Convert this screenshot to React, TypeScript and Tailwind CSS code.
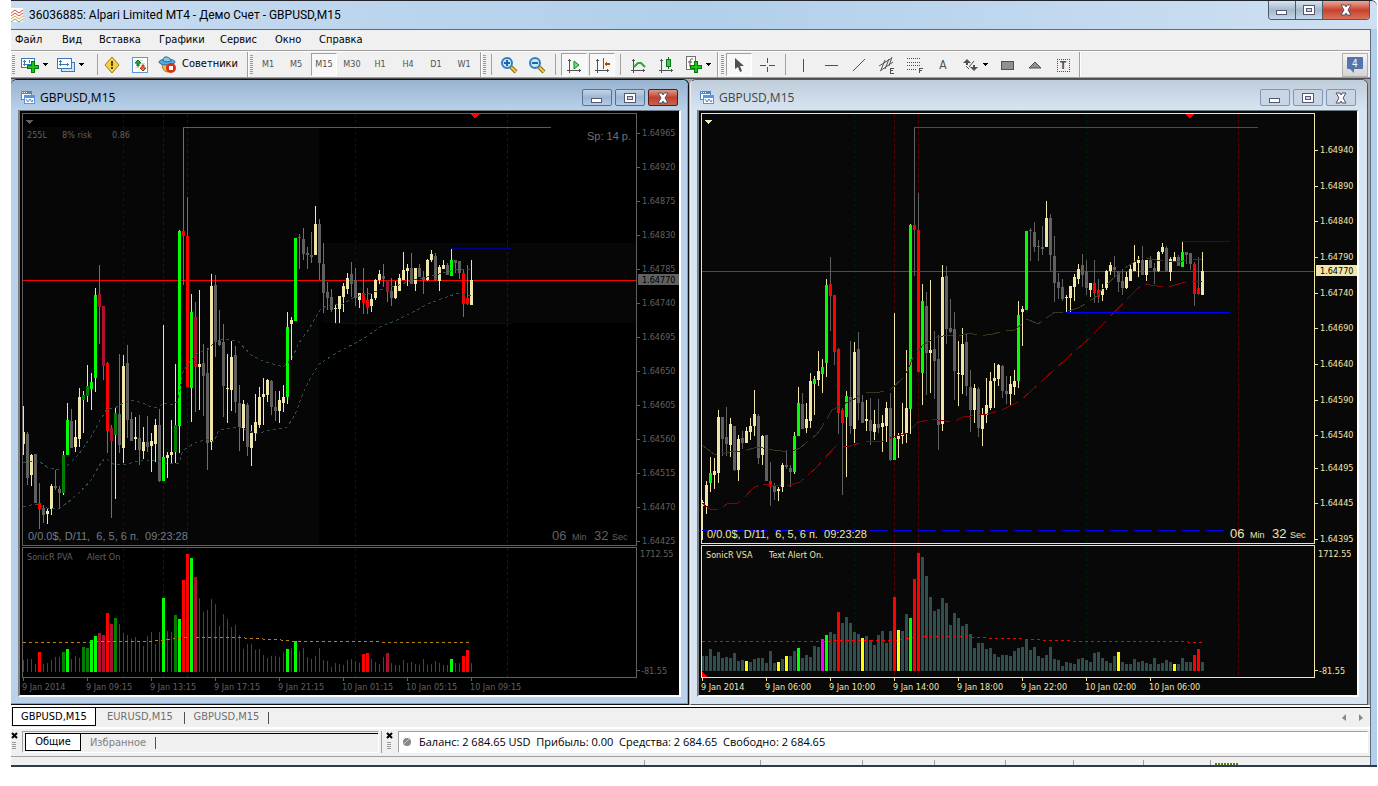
import type { ReactNode } from "react";

// kind, high, body top, body bottom, low, volume
type Bar = [string, number, number, number, number, number];
type Point = [number, number];

// w = rising, g = falling, G/D = climax up, R/C = climax down,
// P = crimson on PVA only, Q = dark green on PVA only
const earlyBars: Bar[] = [
  ["w", 523, 525, 529, 565, 15],
  ["w", 503, 507, 529, 538, 15],
  ["G", 477, 494, 505, 515, 22],
  ["w", 478, 492, 497, 511, 15],
  ["w", 428, 435, 494, 505, 19],
  ["g", 435, 435, 458, 476, 13],
  ["g", 424, 456, 464, 476, 14],
  ["w", 436, 442, 465, 477, 13],
  ["g", 444, 445, 491, 492, 18],
  ["w", 454, 458, 491, 503, 10],
  ["g", 450, 457, 463, 469, 11],
  ["w", 446, 450, 463, 463, 10],
  ["w", 436, 445, 451, 459, 9],
];

const bars: Bar[] = [
  ["w", 406, 432, 444, 455, 12],
  ["g", 432, 434, 478, 485, 13],
  ["w", 454, 455, 475, 486, 13],
  ["g", 454, 454, 503, 503, 8],
  ["R", 483, 503, 509, 529, 20],
  ["g", 505, 508, 515, 523, 8],
  ["w", 509, 511, 514, 524, 9],
  ["w", 484, 486, 509, 515, 12],
  ["g", 470, 486, 488, 490, 15],
  ["g", 486, 489, 493, 509, 15],
  ["D", 451, 455, 493, 495, 20],
  ["G", 403, 420, 455, 455, 23],
  ["g", 409, 421, 448, 448, 13],
  ["w", 420, 437, 447, 452, 16],
  ["w", 388, 397, 439, 447, 14],
  ["D", 391, 395, 400, 433, 25],
  ["Q", 365, 386, 396, 402, 24],
  ["G", 373, 382, 389, 410, 32],
  ["G", 288, 295, 378, 392, 36],
  ["C", 265, 294, 307, 344, 39],
  ["C", 306, 306, 366, 380, 37],
  ["R", 362, 363, 431, 453, 59],
  ["C", 425, 428, 441, 518, 48],
  ["D", 407, 413, 435, 499, 54],
  ["g", 354, 414, 445, 453, 48],
  ["w", 355, 366, 448, 463, 39],
  ["g", 345, 363, 420, 438, 37],
  ["g", 412, 419, 441, 441, 33],
  ["w", 417, 437, 439, 450, 35],
  ["g", 415, 438, 450, 465, 31],
  ["w", 427, 442, 451, 459, 26],
  ["g", 416, 442, 447, 452, 36],
  ["w", 433, 441, 446, 472, 40],
  ["w", 419, 425, 444, 462, 28],
  ["g", 409, 425, 481, 482, 40],
  ["G", 325, 457, 481, 481, 74],
  ["w", 452, 455, 458, 478, 41],
  ["w", 420, 452, 455, 464, 40],
  ["Q", 364, 425, 452, 463, 57],
  ["G", 230, 231, 426, 453, 53],
  ["R", 127, 231, 236, 285, 92],
  ["R", 197, 236, 387, 387, 118],
  ["G", 294, 312, 388, 422, 114],
  ["P", 302, 317, 367, 412, 95],
  ["w", 290, 364, 367, 410, 74],
  ["g", 344, 363, 376, 416, 60],
  ["g", 348, 373, 443, 470, 62],
  ["w", 274, 286, 442, 450, 73],
  ["g", 275, 285, 342, 357, 68],
  ["g", 310, 340, 345, 346, 46],
  ["g", 324, 342, 386, 417, 58],
  ["w", 354, 388, 389, 423, 53],
  ["w", 341, 357, 390, 411, 45],
  ["g", 346, 355, 402, 413, 47],
  ["g", 385, 403, 427, 451, 37],
  ["w", 400, 404, 428, 441, 23],
  ["g", 403, 405, 447, 456, 28],
  ["w", 425, 433, 448, 466, 28],
  ["w", 394, 422, 433, 441, 22],
  ["w", 387, 397, 425, 428, 23],
  ["w", 378, 394, 397, 425, 17],
  ["w", 379, 380, 395, 402, 14],
  ["g", 380, 381, 407, 415, 16],
  ["g", 391, 407, 411, 421, 16],
  ["w", 391, 400, 411, 423, 15],
  ["w", 385, 397, 403, 412, 20],
  ["G", 312, 327, 397, 404, 23],
  ["w", 317, 320, 324, 360, 24],
  ["G", 238, 238, 321, 321, 31],
  ["g", 234, 237, 238, 269, 21],
  ["g", 228, 239, 254, 260, 24],
  ["g", 247, 253, 255, 269, 15],
  ["g", 232, 255, 257, 263, 13],
  ["w", 206, 224, 255, 255, 16],
  ["g", 219, 224, 263, 280, 24],
  ["g", 243, 264, 293, 313, 12],
  ["g", 282, 292, 298, 310, 11],
  ["g", 289, 297, 310, 312, 5],
  ["w", 305, 308, 309, 323, 9],
  ["w", 296, 296, 309, 323, 8],
  ["w", 283, 286, 297, 312, 7],
  ["w", 273, 278, 289, 294, 12],
  ["g", 262, 274, 284, 297, 13],
  ["g", 268, 280, 298, 306, 11],
  ["w", 293, 293, 300, 308, 9],
  ["R", 268, 293, 303, 314, 18],
  ["R", 288, 300, 308, 314, 19],
  ["w", 294, 299, 306, 312, 13],
  ["w", 279, 280, 298, 300, 10],
  ["w", 270, 274, 280, 284, 8],
  ["g", 264, 276, 279, 287, 15],
  ["P", 280, 280, 292, 302, 19],
  ["g", 278, 291, 298, 306, 9],
  ["w", 281, 286, 298, 299, 7],
  ["w", 274, 278, 291, 291, 7],
  ["w", 252, 270, 280, 280, 12],
  ["w", 264, 268, 271, 286, 9],
  ["g", 253, 268, 284, 284, 10],
  ["w", 268, 268, 284, 291, 8],
  ["g", 264, 268, 277, 277, 7],
  ["g", 271, 277, 280, 294, 13],
  ["w", 259, 260, 280, 281, 7],
  ["w", 250, 254, 260, 262, 8],
  ["g", 253, 256, 280, 281, 11],
  ["w", 265, 267, 281, 291, 9],
  ["w", 260, 265, 269, 269, 7],
  ["g", 263, 265, 275, 275, 7],
  ["G", 249, 260, 276, 276, 13],
  ["g", 260, 260, 263, 273, 9],
  ["g", 261, 261, 273, 279, 9],
  ["R", 270, 273, 304, 317, 16],
  ["R", 265, 298, 304, 305, 22],
  ["w", 260, 280, 305, 305, 9],
];

const KHAKI = "#f0e6aa";
const TEAL = "#2f4f4f";

const pvaColors: Record<string, string> = {
  w: KHAKI,
  g: "#606060",
  G: "#00ff00",
  D: "#008000",
  Q: "#008000",
  R: "#ff0000",
  C: "#b01030",
  P: "#b01030",
};
const vsaColors: Record<string, string> = {
  w: KHAKI,
  g: "#606060",
  G: "#00ff00",
  D: "#00ff00",
  Q: KHAKI,
  R: "#ff0000",
  C: "#ff0000",
  P: "#606060",
};

// bar number on the VSA chart -> volume colour
const vsaVolume: Record<number, string> = {
  11: "#ffff00", 19: "#ffff00", 21: "#ffff00", 24: "#00ff00", 30: "#ff00ff",
  31: "#00ff00", 34: "#ff0000", 40: "#ffff00", 48: "#ff0000", 49: "#ffff00",
  52: "#00ff00", 53: "#ff0000", 54: "#ff0000", 104: "#ffff00", 118: "#ffff00",
  123: "#ff0000", 124: "#ff0000",
};

type ChartProps = {
  bars: Bar[];
  colors: Record<string, string>;
  wick: string;
  ink: string;
  background: string;
  scaleY: (v: number) => number;
  mainHeight: number;
  volumeHeight: number;
  volumeBase: number;
  volumeColor: (bar: Bar, i: number) => string | null;
  verticals: [number, string][];
  backdrop?: ReactNode;
  overlay: ReactNode;
  averages: { points: Point[]; color: string; dash: string }[];
  volumeAverage: { points: Point[]; color: string };
  volumeTitle: [string, string];
  status: string;
  arrowX: number;
  clockInk: string;
  statusInk: string;
  spread?: string;
  prices: [string, number][];
  current: { y: number; line: string; box: string };
  times: string[];
};

const toPath = (points: Point[]) => "M" + points.map((p) => p.join(" ")).join("L");

const Chart = (props: ChartProps) => {
  const { ink, mainHeight, volumeHeight, volumeBase } = props;
  return (
    <div
      className="flex h-[584px] overflow-hidden pt-[2px] pl-[2px] font-['DejaVu_Sans_Condensed','Noto_Sans',sans-serif] text-[9px]"
      style={{ background: props.background }}
    >
      <div className="flex min-w-0 flex-1 flex-col">
        <div className="border" style={{ borderColor: ink }}>
          <svg className="block w-full" height={mainHeight} shapeRendering="crispEdges" aria-label="Price chart">
            {props.backdrop}
            {props.verticals.map(([x, color]) => (
              <line key={x} x1={x} x2={x} y1={0} y2={mainHeight} stroke={color} strokeDasharray="3 3" />
            ))}
            <rect x={0} y={props.current.y} width="100%" height={1} fill={props.current.line} />
            {props.bars.map((bar, i) => {
              const [kind, high, top, bottom, low] = bar;
              const y = [high, top, bottom, low].map((v) => Math.round(props.scaleY(v)));
              const light = props.colors[kind] === KHAKI || "GDQ".includes(kind);
              return (
                <g key={i}>
                  <rect x={i * 4} y={y[0]} width={1} height={Math.max(1, y[3] - y[0])} fill={light ? KHAKI : props.wick} />
                  <rect x={i * 4 - 1} y={y[1]} width={3} height={Math.max(1, y[2] - y[1])} fill={props.colors[kind]} />
                </g>
              );
            })}
            {props.averages.map((line, i) => (
              <path key={i} d={toPath(line.points)} fill="none" stroke={line.color} strokeDasharray={line.dash} />
            ))}
            {props.overlay}
            <path d={`M${props.arrowX - 5} 0h9l-4 5z`} fill="#ff0000" />
            <path d="M2 6h8l-4 4z" fill={ink} />
            <text x={5} y={props.spread ? 426 : 424} fill={props.statusInk} xmlSpace="preserve" className="font-['Liberation_Sans',sans-serif] text-[11px]">
              {props.status}
            </text>
            <svg x="100%" overflow="visible" className="font-['Liberation_Sans',sans-serif]">
              {props.spread && (
                <text x={-5} y={26} textAnchor="end" fill="#707070" className="text-[11px]">
                  {props.spread}
                </text>
              )}
              <g fill={props.clockInk} transform={`translate(0 ${props.spread ? 426 : 424})`}>
                <text x={-84} className="text-[13px]">06</text>
                <text x={-64} className="text-[9px]">Min</text>
                <text x={-42} className="text-[13px]">32</text>
                <text x={-24} className="text-[9px]">Sec</text>
              </g>
            </svg>
          </svg>
        </div>
        <div className="mt-px border" style={{ borderColor: ink }}>
          <svg className="block w-full" height={volumeHeight} shapeRendering="crispEdges" aria-label="Volume chart">
            {props.verticals.map(([x, color]) => (
              <line key={x} x1={x} x2={x} y1={0} y2={volumeHeight} stroke={color} strokeDasharray="3 3" />
            ))}
            {props.bars.map((bar, i) => {
              const color = props.volumeColor(bar, i);
              return color ? (
                <rect key={i} x={i * 4 - 1} y={volumeBase - bar[5]} width={3} height={bar[5]} fill={color} />
              ) : (
                <rect key={i} x={i * 4} y={volumeBase - bar[5]} width={1} height={bar[5]} fill={TEAL} />
              );
            })}
            <path d={toPath(props.volumeAverage.points)} fill="none" stroke={props.volumeAverage.color} strokeDasharray="3 3" />
            {!props.spread && <path d={`M0 ${volumeHeight - 5}l5 5h-5z`} fill="#ff0000" />}
            <text x={4} y={12} fill={ink}>{props.volumeTitle[0]}</text>
            <text x={props.spread ? 64 : 67} y={12} fill={ink}>{props.volumeTitle[1]}</text>
          </svg>
        </div>
        <svg className="block w-full" height={17} overflow="visible" aria-label="Time axis">
          {props.times.map((time, i) => (
            <g key={time} fill={ink}>
              <rect x={i * 64 + 1} y={0} width={1} height={3} />
              <text x={i * 64} y={12}>{time}</text>
            </g>
          ))}
        </svg>
      </div>
      <svg className="block w-[42px] shrink-0" height={582} aria-label="Price axis">
        {props.prices.map(([label, y]) => (
          <g key={label} fill={ink}>
            <rect x={0} y={y - 113} width={3} height={1} />
            <text x={5} y={y - 110}>{label}</text>
          </g>
        ))}
        <text x={3} y={444} fill={ink}>1712.55</text>
        <text x={4} y={561} fill={ink}>-81.55</text>
        <rect x={0} y={557} width={3} height={1} fill={ink} />
        <rect x={1} y={props.current.y - 5} width={41} height={11} fill={props.current.box} />
        <text x={5} y={props.current.y + 4} fill="#000">1.64770</text>
      </svg>
    </div>
  );
};

const pvaUpper: Point[] = [
  [0, 349], [8, 347], [16, 347], [24, 353], [36, 356], [44, 352], [56, 340], [68, 323], [76, 308], [84, 295],
  [92, 294], [100, 289], [108, 286], [120, 289], [128, 293], [136, 293], [140, 289], [148, 291], [154, 288],
  [157, 276], [160, 258], [168, 246], [176, 238], [184, 237], [192, 227], [204, 225], [216, 228], [228, 241],
  [240, 247], [250, 250], [260, 253], [268, 246], [276, 229], [286, 215], [297, 196], [303, 192], [320, 190],
  [332, 183], [348, 179], [360, 175], [376, 171], [387, 167], [404, 163], [420, 159], [436, 155], [448, 155],
];
const pvaLower: Point[] = [
  [0, 393], [12, 390], [24, 394], [36, 394], [44, 389], [56, 379], [68, 366], [76, 352], [82, 344], [92, 351],
  [104, 350], [112, 348], [124, 346], [136, 347], [144, 350], [156, 349], [160, 336], [172, 329], [184, 325],
  [191, 328], [196, 316], [208, 314], [216, 313], [224, 316], [233, 320], [240, 318], [248, 316], [264, 313],
  [272, 301], [280, 279], [288, 263], [296, 250], [307, 243], [317, 237], [340, 225], [357, 213], [374, 206],
  [390, 198], [407, 189], [424, 183], [435, 179], [448, 182],
];
const vsaUpper: Point[] = [
  [0, 331], [13, 341], [28, 338], [41, 337], [56, 333], [71, 336], [88, 338], [98, 334], [115, 320], [120, 313],
  [130, 296], [141, 290], [151, 286], [161, 279], [178, 278], [188, 276], [201, 264], [206, 256], [211, 243],
  [221, 231], [235, 223], [248, 221], [256, 222], [268, 219], [278, 222], [291, 220], [305, 216], [313, 216],
  [325, 205], [336, 210], [353, 198], [363, 198], [376, 194], [385, 189], [395, 182], [401, 174], [415, 161],
  [423, 154], [440, 143], [455, 146], [475, 148], [488, 146], [500, 145],
];
const vsaLower: Point[] = [
  [0, 389], [8, 395], [17, 395], [25, 390], [36, 389], [43, 383], [51, 374], [60, 370], [73, 372], [88, 371],
  [98, 368], [115, 353], [120, 347], [135, 331], [145, 333], [161, 328], [181, 327], [191, 323], [205, 319],
  [215, 309], [228, 305], [251, 308], [261, 303], [285, 300], [300, 296], [318, 287], [375, 235], [388, 224],
  [395, 216], [433, 177], [441, 170], [455, 172], [466, 173], [480, 169], [490, 167], [500, 168],
];

const SysIcon = ({ kind }: { kind: string }) => (
  <svg width="16" height="12" viewBox="0 0 16 12" shapeRendering="crispEdges">
    {kind === "min" && <path d="M2 6h11v5H2zM3 7v3h9V7z" fill="#555870" fillRule="evenodd" />}
    {kind === "min" && <rect x="3" y="7" width="9" height="3" fill="#fff" />}
    {kind === "max" && (
      <>
        <rect x="2" y="1" width="12" height="10" fill="#555870" />
        <rect x="3" y="2" width="10" height="8" fill="#fff" />
        <rect x="5" y="4" width="6" height="4" fill="#555870" />
        <rect x="6" y="5" width="4" height="2" fill="#c8d8e8" />
      </>
    )}
    {kind === "close" && (
      <g shapeRendering="auto">
        <path d="M3 1h4l1 2 1-2h4l-3 5 3 5H9L8 9l-1 2H3l3-5z" fill="#fff" stroke="#555060" />
      </g>
    )}
  </svg>
);

const sysButtons = [
  ["min", "Свернуть"],
  ["max", "Развернуть"],
  ["close", "Закрыть"],
];

const ChartWindow = ({ active, children }: { active: boolean; children: ReactNode }) => (
  <section
    className={
      active
        ? "flex h-[626px] min-w-0 flex-col rounded-t-md border-t border-r border-b border-[#111] bg-[#b9d1ea]"
        : "flex h-[626px] min-w-0 flex-col rounded-t-md border border-[#555] border-l-[#e8eef6] bg-[#d7e4f2]"
    }
  >
    <div className={active ? "flex grow flex-col rounded-tr-md border-r border-b border-[#35c0e0] pr-[6px] pl-[7px]" : "flex grow flex-col pr-2 pl-[6px]"}>
      <header
        className={
          active
            ? "-mr-[6px] -ml-[7px] flex h-[30px] items-center gap-1 rounded-t-md bg-linear-to-b from-[#98b3d0] to-[#b9d1ea] pt-[5px] pr-[9px] pl-[9px]"
            : "-mr-2 -ml-[6px] flex h-[30px] items-center gap-1 rounded-t-md bg-linear-to-b from-[#bfcddb] to-[#d7e4f2] pt-[5px] pr-[11px] pl-[8px]"
        }
      >
        <svg width="16" height="15" viewBox="0 0 16 15">
          <g shapeRendering="crispEdges">
            <path d="M1 1h11v9H1z" fill="#4a86d8" />
            <path d="M2 4h9v5H2z" fill="#fff" />
            <path d="M2 2h1v1H2zM4 2h1v1H4zM6 2h1v1H6z" fill="#fff" />
            <path d="M4 5h11v9H4z" fill="#5c94e0" />
            <path d="M5 8h9v5H5z" fill="#fff" />
          </g>
          <path d="M6 9l2 3 2-3 2 3 1-2" fill="none" stroke="#4a86d8" />
        </svg>
        <h2
          className={
            active
              ? "grow font-['Open_Sans',sans-serif] text-[12px] leading-4 text-black"
              : "grow font-['Open_Sans',sans-serif] text-[12px] leading-4 text-[#444]"
          }
        >
          GBPUSD,M15
        </h2>
        <div className="flex gap-[3px]">
          {sysButtons.map(([kind, label]) => (
            <button
              key={kind}
              aria-label={label}
              className={
                !active
                  ? "flex h-[17px] w-[30px] items-center justify-center rounded-[2px] border border-[#8496b2] bg-[#c7d5e4]"
                  : kind === "close"
                    ? "flex h-[17px] w-[30px] items-center justify-center rounded-[2px] border border-[#5a1a1a] bg-linear-to-b from-[#dc9a8c] via-[#c0402c] to-[#c86450]"
                    : "flex h-[17px] w-[30px] items-center justify-center rounded-[2px] border border-[#56708f] bg-linear-to-b from-[#c3d5e8] via-[#9db6d2] to-[#b4cce6]"
              }
            >
              <SysIcon kind={kind} />
            </button>
          ))}
        </div>
      </header>
      <div className="border-t border-r-2 border-b-2 border-l-2 border-t-[#707880] border-r-white border-b-white border-l-[#808080]">{children}</div>
    </div>
  </section>
);

const Grip = () => (
  <svg className="shrink-0" width="4" height="20" shapeRendering="crispEdges">
    {[0, 2, 4, 6, 8, 10, 12, 14, 16, 18].map((y) => (
      <rect key={y} y={y} width="3" height="1" fill="#999" />
    ))}
  </svg>
);
const Line = () => <div className="h-[21px] w-px shrink-0 bg-[#a0a0a0]" />;
const Edge = () => <div className="h-[25px] w-[2px] shrink-0 border-r border-l border-r-white border-l-[#a0a0a0]" />;
const Caret = () => (
  <svg className="shrink-0" width="5" height="3" shapeRendering="crispEdges">
    <path d="M0 0h5L3 3H2z" fill="#000" />
  </svg>
);

const Tool = ({ label, pressed, children }: { label: string; pressed?: boolean; children: ReactNode }) => (
  <button
    aria-label={label}
    className={
      pressed
        ? "mx-px flex h-[23px] w-[26px] shrink-0 items-center justify-center border border-t-[#a0a0a0] border-r-white border-b-white border-l-[#a0a0a0] bg-[#f8f8f8] pt-px"
        : "flex h-[23px] w-7 shrink-0 items-center justify-center pt-px"
    }
  >
    {children}
  </button>
);

const Axes = ({ children }: { children?: ReactNode }) => (
  <svg width="18" height="18" viewBox="0 0 18 18" shapeRendering="crispEdges">
    <path d="M4 3h1v14h-1zM2 14h14v1h-14zM3 4h3v1h-3zM14 13h1v3h-1z" fill="#505050" />
    {children}
  </svg>
);
const Plus = ({ x, y }: { x: number; y: number }) => (
  <path
    transform={`translate(${x} ${y})`}
    d="M4 0h3v4h4v3h-4v4h-3v-4h-4v-3h4z"
    fill="#18c818"
    stroke="#067806"
    shapeRendering="crispEdges"
  />
);
const Magnifier = ({ plus }: { plus?: boolean }) => (
  <svg width="18" height="18" viewBox="0 0 18 18">
    <path d="M11 11l5 5" stroke="#8a6a10" strokeWidth="4" />
    <path d="M11 11l5 5" stroke="#f0cc40" strokeWidth="2" />
    <circle cx="7" cy="7" r="5" fill="#c8e6fa" stroke="#2f7fc4" strokeWidth="2" />
    <path d={plus ? "M4 7h6M7 4v6" : "M4 7h6"} stroke="#2464a4" strokeWidth="2" />
  </svg>
);

const Toolbar = () => (
  <div role="toolbar" className="flex h-[27px] items-center border-t border-b border-t-white border-b-[#a0a0a0] text-[#505050]">
    <div className="flex w-[236px] shrink-0 items-center pl-[1px]">
      <Grip />
      <button aria-label="Новый график" className="ml-[4px] flex w-[35px] items-center gap-[3px]">
        <svg width="20" height="18" viewBox="0 0 20 18">
          <path d="M1 2h14v10H1z" fill="#3c78b4" />
          <path d="M2 3h12v8H2z" fill="#fff" />
          <path d="M4 4h1v6H4zM3 8h9v1H3zM9 4h1v3H9zM3 5h3v1H3z" fill="#3c78b4" />
          <Plus x={7} y={5} />
        </svg>
        <Caret />
      </button>
      <button aria-label="Профили" className="flex w-[36px] items-center gap-[2px]">
        <svg width="22" height="18" viewBox="0 0 22 18">
          <path d="M6 6h14v10H6z" fill="#3c78b4" />
          <path d="M7 7h12v8H7z" fill="#d4e6f8" />
          <path d="M2 2h15v11H2z" fill="#3c78b4" />
          <path d="M3 3h13v9H3z" fill="#fff" />
          <path d="M5 4h1v6H5zM4 8h10v1H4zM12 7h1v3h-1zM4 5h3v1H4z" fill="#3c78b4" />
        </svg>
        <Caret />
      </button>
      <div className="ml-[6px]"><Line /></div>
      <Tool label="Обзор рынка">
        <svg width="18" height="18" viewBox="0 0 18 18">
          <path d="M9 1l7 8-7 8-7-8z" fill="#f4d044" stroke="#a47c10" strokeLinejoin="round" />
          <path d="M8 5h2v5h-2zM8 11h2v2h-2z" fill="#5a4208" />
        </svg>
      </Tool>
      <Tool label="Новый ордер">
        <svg width="18" height="18" viewBox="0 0 18 18">
          <path d="M1 1h16v16H1z" fill="#5c98d4" />
          <path d="M2 2h14v14H2z" fill="#fff" />
          <path d="M4 4h8v1H4zM9 7h5v1H9zM4 11h4v1H4z" fill="#c8d8e8" />
          <path d="M7 4l3 3h-2v3h-2v-3h-2z" fill="#28a838" stroke="#107020" />
          <path d="M12 15l-3-3h2v-3h2v3h2z" fill="#f07040" stroke="#a83c10" />
        </svg>
      </Tool>
      <button className="flex items-center gap-[5px] pl-1 text-[11px] text-black">
        <svg width="19" height="19" viewBox="0 0 19 19">
          <path d="M4 8q0 9 6 9t5-9z" fill="#f0bc3c" stroke="#a47820" />
          <ellipse cx="9" cy="7" rx="8" ry="3" fill="#58a8dc" stroke="#2470a4" />
          <path d="M5 6q0-5 4-4t4 4q-4 2-8 0z" fill="#84c8ec" stroke="#2470a4" />
          <circle cx="13" cy="13" r="5" fill="#d83018" />
          <rect x="11" y="11" width="4" height="4" fill="#fff" />
        </svg>
        Советники
      </button>
    </div>
    <Edge />
    <div className="flex w-[231px] shrink-0 items-center pl-[1px] text-[9px]">
      <Grip />
      {["M1", "M5", "M15", "M30", "H1", "H4", "D1", "W1"].map((name) => (
        <Tool key={name} label={name} pressed={name === "M15"}>{name}</Tool>
      ))}
    </div>
    <Edge />
    <div className="flex w-[235px] shrink-0 items-center pl-[1px]">
      <Grip />
      <div className="ml-1 mr-[3px]"><Line /></div>
      <Tool label="Увеличить"><Magnifier plus /></Tool>
      <Tool label="Уменьшить"><Magnifier /></Tool>
      <div className="mx-1"><Line /></div>
      <Tool label="Автопрокрутка" pressed><Axes><path d="M9 5l5 4-5 4z" fill="#70e070" stroke="#108420" shapeRendering="auto" /></Axes></Tool>
      <Tool label="Сдвиг графика" pressed>
        <Axes><path d="M10 2h1v11h-1z" fill="#2c6c94" /><path d="M17 7h-3v-2l-3 3 3 3v-2h3z" fill="#c83c10" /></Axes>
      </Tool>
      <div className="ml-1 mr-[3px]"><Line /></div>
      <Tool label="Линия"><Axes><path d="M5 11l4-4h3l4 4" fill="none" stroke="#28a838" shapeRendering="auto" strokeWidth="2" /></Axes></Tool>
      <Tool label="Свечи"><Axes><path d="M11 1h1v12h-1zM9 3h5v8H9z" fill="#107020" /><path d="M10 4h3v6h-3z" fill="#30d040" /></Axes></Tool>
      <button aria-label="Индикаторы" className="ml-[4px] flex items-center gap-1">
        <svg width="18" height="19" viewBox="0 0 18 19">
          <path d="M2 1h10v14H2z" fill="#707070" />
          <path d="M3 2h8v12H3z" fill="#fff" />
          <path d="M9 4q-3-1-3 3v5M4 7h4" fill="none" stroke="#505050" />
          <Plus x={6} y={6} />
        </svg>
        <Caret />
      </button>
    </div>
    <Edge />
    <div className="flex w-[360px] shrink-0 items-center pl-[2px]">
      <Grip />
      <Tool label="Курсор" pressed>
        <svg width="16" height="16" viewBox="0 0 16 16"><path d="M4 1v11l3-2 2 5 2-1-2-5h4z" fill="#505050" /></svg>
      </Tool>
      <Tool label="Перекрестие">
        <svg width="16" height="16" viewBox="0 0 16 16" shapeRendering="crispEdges"><path d="M8 1h1v5h-1zM8 10h1v5h-1zM1 8h6v1h-6zM10 8h6v1h-6z" fill="#505050" /></svg>
      </Tool>
      <div className="ml-[4px] mr-[3px]"><Line /></div>
      <Tool label="Вертикальная линия"><div className="h-[13px] w-px bg-[#505050]" /></Tool>
      <Tool label="Горизонтальная линия"><div className="h-px w-[13px] bg-[#505050]" /></Tool>
      <Tool label="Трендовая линия">
        <svg width="14" height="14" viewBox="0 0 14 14"><path d="M1 13L13 1" stroke="#505050" /></svg>
      </Tool>
      <Tool label="Канал">
        <svg width="18" height="18" viewBox="0 0 18 18" stroke="#505050" fill="none">
          <path d="M1 10L14 2M2 15L15 6M3 14L7 4M7 13L11 3M11 10L14 1" />
          <path d="M16 12h-4v5h4M12 14h3" shapeRendering="crispEdges" />
        </svg>
      </Tool>
      <Tool label="Фибоначчи">
        <svg width="18" height="18" viewBox="0 0 18 18" stroke="#505050" fill="none" shapeRendering="crispEdges">
          <path d="M1 2h14M1 6h14M1 9h14M1 13h10" strokeDasharray="1 1" />
          <path d="M13 17v-5h4M13 14h3" />
        </svg>
      </Tool>
      <Tool label="Текст"><span className="text-[12px]">A</span></Tool>
      <button aria-label="Стрелки" className="ml-[5px] mr-[5px] flex w-[26px] items-center gap-1">
        <svg className="shrink-0" width="17" height="16" viewBox="0 0 17 16" fill="#505050">
          <path d="M5 2l4 4H6v2H4V6H1zM12 14l-4-4h3V8h2v2h3z" />
          <path d="M12 4l-5 6M4 9l3 3" stroke="#505050" fill="none" />
        </svg>
        <Caret />
      </button>
      <Tool label="Прямоугольник"><div className="h-[9px] w-[13px] border border-[#505050] bg-[#909090]" /></Tool>
      <Tool label="Треугольник">
        <svg width="14" height="8" viewBox="0 0 14 8"><path d="M1 7l6-6 6 6z" fill="#909090" stroke="#505050" /></svg>
      </Tool>
      <Tool label="Метка">
        <span className="flex h-[13px] w-[13px] items-center justify-center border border-dotted border-[#505050] text-[10px] font-bold">T</span>
      </Tool>
    </div>
    <Edge />
    <button aria-label="Сообщения" className="mr-[2px] ml-auto flex h-6 w-[26px] items-center justify-center border border-[#b0b0b0] bg-linear-to-b from-[#f4f4f4] to-[#d4d4d4]">
      <svg width="16" height="16" viewBox="0 0 16 16">
        <path d="M1 0h14q1 0 1 1v10q0 1-1 1h-8v4l-4-4h-2q-1 0-1-1v-10q0-1 1-1z" fill="#5474ac" />
        <text x="5" y="10" fill="#fff" className="text-[10px]">4</text>
      </svg>
    </button>
  </div>
);

const DockHandle = () => (
  <div className="flex w-[7px] shrink-0 flex-col items-center gap-[3px] pt-px">
    <button aria-label="Закрыть панель">
      <svg className="block" width="7" height="7" viewBox="0 0 7 7"><path d="M1 1l5 5M6 1l-5 5" stroke="#000" strokeWidth="2" /></svg>
    </button>
    <svg width="5" height="8" shapeRendering="crispEdges"><path d="M0 0h4v1H0zM0 2h4v1H0zM0 4h4v1H0zM0 6h4v1H0z" fill="#999" /></svg>
  </div>
);

export default function App() {
  return (
    <div className="bg-white pr-px pb-5 pl-[11px] font-['DejaVu_Sans_Condensed','Noto_Sans',sans-serif]">
      <div className="flex flex-col rounded-tr-md border-t border-b-2 border-t-[#22242c] border-b-[#2c3c4c] bg-[#b3cfeb] pr-[6px]">
        <header className="-mr-[6px] flex h-[28px] items-start rounded-tr-md bg-linear-to-r from-[#c9dcf0] via-[#b1cfeb] to-[#cfe0f2] pr-[7px]">
          <div className="flex h-[28px] items-center gap-[6px]">
            <svg width="12" height="14" viewBox="0 0 12 14" fill="none">
              <rect width="12" height="14" fill="#fff" />
              <path d="M0 5l4-3 4 3 4-3M0 8l4-3 4 3 4-3" stroke="#d84c3c" />
              <path d="M0 11l4-3 4 3 4-3" stroke="#e8a040" />
              <path d="M0 14l4-3 4 3 4-3" stroke="#68b058" />
            </svg>
            <h1 className="font-['Roboto',sans-serif] text-[12px] text-black">36036885: Alpari Limited MT4 - Демо Счет - GBPUSD,M15</h1>
          </div>
          <div className="ml-auto flex h-[19px] overflow-hidden rounded-b-[4px] border border-t-0 border-[#4c5a6e]">
            {sysButtons.map(([kind, label]) => (
              <button
                key={kind}
                aria-label={label}
                className={
                  kind === "close"
                    ? "flex w-[46px] items-center justify-center bg-linear-to-b from-[#e8a898] via-[#c8402c] to-[#d87058]"
                    : "flex w-[27px] items-center justify-center border-r border-[#4c5a6e] bg-linear-to-b from-[#d8e4f0] via-[#a4b8cc] to-[#c4d8ec]"
                }
              >
                <SysIcon kind={kind} />
              </button>
            ))}
          </div>
        </header>
        <div className="border-t border-r border-[#5c6c7c] bg-[#f0f0f0]">
          <nav className="flex h-[21px] items-center border-b border-[#a0a0a0] pt-px pl-[4px] text-[11px] text-black">
            <button className="w-[47px] text-left">Файл</button>
            <button className="w-[37px] text-left">Вид</button>
            <button className="w-[60px] text-left">Вставка</button>
            <button className="w-[61px] text-left">Графики</button>
            <button className="w-[55px] text-left">Сервис</button>
            <button className="w-[44px] text-left">Окно</button>
            <button className="text-left">Справка</button>
          </nav>
          <Toolbar />
          <main className="grid grid-cols-2 gap-px border-t border-[#505050] bg-[#a8a8a8] pr-[2px]">
            <ChartWindow active>
              <Chart
                bars={bars}
                colors={pvaColors}
                wick="#707070"
                ink="#606060"
                background="#000"
                scaleY={(v) => v - 114}
                mainHeight={431}
                volumeHeight={129}
                volumeBase={124}
                volumeColor={(bar) => ("wg".includes(bar[0]) ? null : pvaColors[bar[0]])}
                verticals={[[100, "#041c08"], [140, "#4c0404"], [164, "#4c0404"], [332, "#041c08"], [484, "#4c0404"]]}
                backdrop={
                  <>
                    <rect x={0} y={13} width={296} height={418} fill="#060606" />
                    <rect x={300} y={129} width="100%" height={80} fill="#060606" />
                  </>
                }
                overlay={
                  <>
                    <rect x={160} y={13} width={368} height={1} fill="#5c6428" />
                    <rect x={428} y={134} width={60} height={1} fill="#00008b" />
                    <rect x={312} y={209} width={176} height={1} fill="#00008b" />
                    <g fill="#606060">
                      <text x={4} y={24}>255L</text>
                      <text x={39} y={24}>8% risk</text>
                      <text x={89} y={24}>0.86</text>
                    </g>
                  </>
                }
                averages={[
                  { points: pvaUpper, color: TEAL, dash: "3 3" },
                  { points: pvaLower, color: TEAL, dash: "3 3" },
                ]}
                volumeAverage={{
                  color: "#b8860b",
                  points: [[0, 94], [67, 94], [68, 93], [130, 93], [150, 91], [172, 89], [216, 89], [222, 90], [240, 91], [258, 92], [268, 93], [354, 93], [356, 94], [448, 94]],
                }}
                volumeTitle={["SonicR PVA", "Alert On"]}
                status="0/0.0$, D/11,  6, 5, 6 п.  09:23:28"
                statusInk="#707c88"
                clockInk="#606060"
                arrowX={452}
                spread="Sp: 14 p."
                prices={[
                  ["1.64965", 133], ["1.64920", 167], ["1.64875", 201], ["1.64830", 235], ["1.64785", 269],
                  ["1.64740", 303], ["1.64695", 337], ["1.64650", 371], ["1.64605", 405], ["1.64560", 439],
                  ["1.64515", 473], ["1.64470", 507], ["1.64425", 541],
                ]}
                current={{ y: 166, line: "#ff0000", box: "#606060" }}
                times={["9 Jan 2014", "9 Jan 09:15", "9 Jan 13:15", "9 Jan 17:15", "9 Jan 21:15", "10 Jan 01:15", "10 Jan 05:15", "10 Jan 09:15"]}
              />
            </ChartWindow>
            <ChartWindow active={false}>
              <Chart
                bars={[...earlyBars, ...bars]}
                colors={vsaColors}
                wick="#606060"
                ink={KHAKI}
                background="#080808"
                scaleY={(v) => 157 + (v - 280) * 0.9423}
                mainHeight={429}
                volumeHeight={131}
                volumeBase={125}
                volumeColor={(_, i) => vsaVolume[i] ?? TEAL}
                verticals={[[152, "#041c08"], [192, "#580404"], [216, "#580404"], [384, "#041c08"], [536, "#580404"]]}
                overlay={
                  <>
                    <rect x={212} y={13} width={344} height={1} fill="#008000" />
                    <rect x={480} y={127} width={48} height={1} fill="#0000ff" />
                    <rect x={364} y={198} width={164} height={1} fill="#0000ff" />
                    <line x1={0} x2={523} y1={416} y2={416} stroke="#0000ff" strokeDasharray="18 6" />
                  </>
                }
                averages={[
                  { points: vsaUpper, color: "#38381c", dash: "18 6" },
                  { points: vsaLower, color: "#8b0000", dash: "18 6" },
                ]}
                volumeAverage={{
                  color: "#ff0000",
                  points: [[0, 95], [128, 95], [130, 94], [198, 94], [216, 91], [226, 90], [256, 90], [270, 91], [286, 92], [322, 93], [340, 94], [370, 95], [484, 95], [486, 96], [500, 96]],
                }}
                volumeTitle={["SonicR VSA", "Text Alert On."]}
                status="0/0.0$, D/11,  6, 5, 6 п.  09:23:28"
                statusInk={KHAKI}
                clockInk={KHAKI}
                arrowX={488}
                prices={[
                  ["1.64940", 150], ["1.64890", 186], ["1.64840", 221], ["1.64790", 257], ["1.64740", 293],
                  ["1.64690", 328], ["1.64640", 364], ["1.64590", 400], ["1.64540", 435], ["1.64495", 468],
                  ["1.64445", 503], ["1.64395", 539],
                ]}
                current={{ y: 157, line: "#ff0000", box: KHAKI }}
                times={["9 Jan 2014", "9 Jan 06:00", "9 Jan 10:00", "9 Jan 14:00", "9 Jan 18:00", "9 Jan 22:00", "10 Jan 02:00", "10 Jan 06:00"]}
              />
            </ChartWindow>
          </main>
          <div className="h-[2px] bg-white" />
          <div className="flex h-[22px] items-start border-b-2 border-white pl-px text-[11px] text-[#707070]">
            <button className="h-[19px] w-[84px] border border-black bg-white pt-px leading-4 text-black">GBPUSD,M15</button>
            <div className="flex h-[20px] grow items-center border-t border-black">
              <button className="w-[88px] text-center">EURUSD,M15</button>
              <span className="h-3 w-px bg-[#505050]" />
              <button className="w-[83px] text-center">GBPUSD,M15</button>
              <span className="h-3 w-px bg-[#505050]" />
              <button aria-label="Назад" className="mr-3 ml-auto"><svg width="5" height="7"><path d="M4 0v7L0 4z" fill="#888" /></svg></button>
              <button aria-label="Вперёд" className="mr-[6px]"><svg width="5" height="7"><path d="M0 0v7l4-3z" fill="#888" /></svg></button>
            </div>
          </div>
          <div className="flex h-[28px] border-b border-[#a0a0a0] pt-[2px] pb-[3px]">
            <DockHandle />
            <div className="ml-1 flex w-[357px] shrink-0 items-start border border-t-[#a0a0a0] border-r-white border-b-white border-l-[#a0a0a0] pt-px pl-[2px] text-[11px] text-[#808080]">
              <button className="h-[18px] w-[56px] border border-black bg-white leading-4 text-black">Общие</button>
              <div className="flex h-[19px] grow items-center border-t border-black">
                <button className="w-[74px] text-center">Избранное</button>
                <span className="h-3 w-px bg-[#505050]" />
              </div>
            </div>
            <div className="mr-1 ml-[2px] w-px bg-[#a0a0a0]" />
            <DockHandle />
            <div className="mr-[2px] ml-[5px] flex grow items-center gap-[7px] border border-t-[#a0a0a0] border-r-white border-b-white border-l-[#a0a0a0] bg-white pl-1 font-['Open_Sans',sans-serif] text-[11px] text-black">
              <svg width="9" height="9" viewBox="0 0 9 9"><circle cx="4" cy="4" r="4" fill="#888" /><path d="M1 6l5-5" stroke="#ccc" /></svg>
              <p className="whitespace-pre">{"Баланс: 2 684.65 USD  Прибыль: 0.00  Средства: 2 684.65  Свободно: 2 684.65"}</p>
            </div>
          </div>
          <footer className="flex h-[8px] items-end">
            <div className="h-[5px] w-[634px] border-r border-[#a0a0a0]" />
            <div className="h-[5px] w-[116px] border-r border-[#a0a0a0]" />
            <div className="h-[5px] w-[102px] border-r border-[#a0a0a0]" />
            <div className="h-[5px] w-[72px] border-r border-[#a0a0a0]" />
            <div className="h-[5px] w-[71px] border-r border-[#a0a0a0]" />
            <div className="h-[5px] w-[68px] border-r border-[#a0a0a0]" />
            <div className="h-[5px] w-[70px] border-r border-[#a0a0a0]" />
            <div className="h-[5px] w-[67px] border-r border-[#a0a0a0]" />
            <svg className="ml-1" width="24" height="2" shapeRendering="crispEdges">
              {[0, 3, 6, 9, 12, 15, 18, 21].map((x) => (
                <rect key={x} x={x} width="2" height="2" fill="#5c7c1c" />
              ))}
            </svg>
          </footer>
        </div>
      </div>
    </div>
  );
}
